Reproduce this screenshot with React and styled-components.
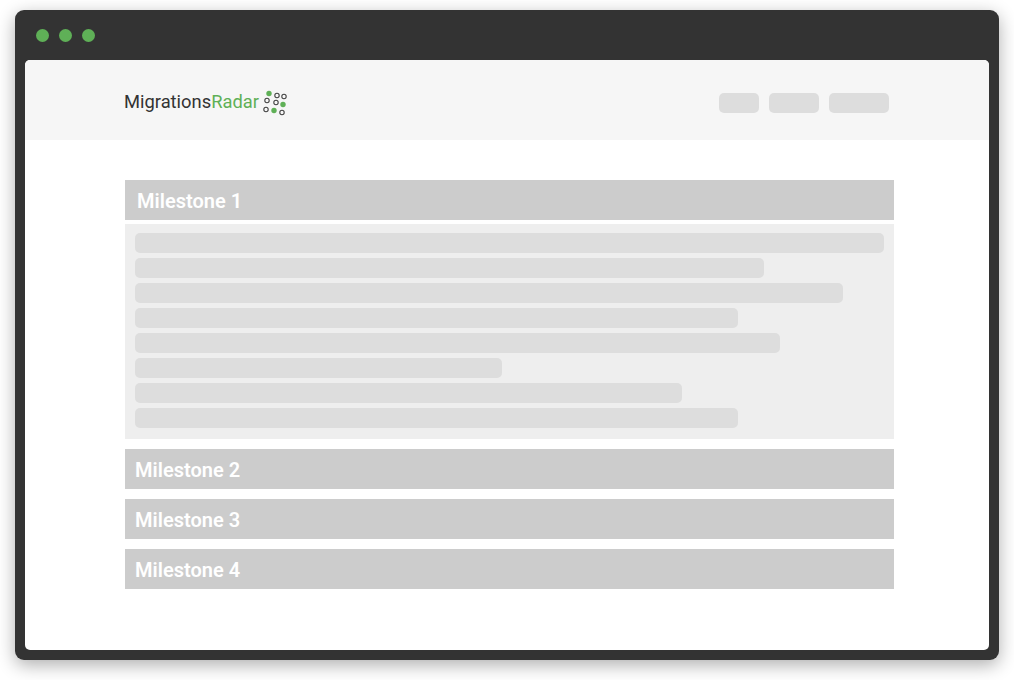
import React from 'react'
import styled, { createGlobalStyle } from 'styled-components'

const GlobalStyle = createGlobalStyle`
  html, body {
    margin: 0;
    padding: 0;
    background: #fff;
    font-family: Roboto, "Liberation Sans", sans-serif;
  }
`

const Page = styled.div`
  width: 1014px;
  height: 680px;
  padding: 10px 15px 20px;
  box-sizing: border-box;
  overflow: hidden;
`

const Window = styled.div`
  height: 650px;
  background: #333;
  border-radius: 9px;
  padding: 0 10px 10px;
  box-sizing: border-box;
  display: flex;
  flex-direction: column;
  box-shadow: 0 5px 18px rgba(0, 0, 0, 0.32);
`

const TitleBar = styled.div`
  height: 50px;
  flex: none;
  display: flex;
  align-items: center;
  gap: 10px;
  padding: 0 0 0 11px;
`

const Light = styled.span`
  width: 13px;
  height: 13px;
  border-radius: 50%;
  background: #5fb057;
`

const Screen = styled.div`
  flex: 1;
  background: #fff;
  border-radius: 5px;
  overflow: hidden;
`

const Header = styled.header`
  height: 80px;
  background: #f6f6f6;
  box-sizing: border-box;
  padding: 5px 100px 0 99px;
  display: flex;
  align-items: center;
  justify-content: space-between;
`

const Logo = styled.div`
  display: flex;
  align-items: center;
  gap: 2px;
`

const LogoText = styled.span`
  width: 136px;
  font-size: 18.35px;
  line-height: 24px;
  padding-bottom: 2px;
  color: #333;
  white-space: nowrap;
`

const LogoAccent = styled.span`
  color: #5fb057;
`

const Nav = styled.nav`
  display: flex;
  gap: 10px;
`

const NavPill = styled.span`
  width: ${p => p.$w}px;
  height: 20px;
  border-radius: 5px;
  background: #ddd;
`

const Main = styled.main`
  padding: 40px 95px 0 100px;
  display: flex;
  flex-direction: column;
`

const Milestone = styled.div`
  height: 40px;
  background: #ccc;
  color: #fff;
  font-size: 20px;
  font-weight: 600;
  line-height: 42px;
  padding-left: ${p => (p.$open ? 12 : 10)}px;
  margin-bottom: ${p => (p.$open ? 4 : 10)}px;
`

const Panel = styled.div`
  background: #eee;
  padding: 9px 10px 11px;
  margin-bottom: 10px;
  display: flex;
  flex-direction: column;
  gap: 5px;
`

const Line = styled.div`
  width: ${p => p.$w}px;
  height: 20px;
  border-radius: 5px;
  background: #ddd;
`

const RadarIcon = () => {
  const open = [[277, 95], [284, 96], [267, 100], [276, 102], [266, 109], [282, 112]]
  const filled = [[269, 93], [283, 104], [274, 110]]
  return (
    <svg width="28" height="28" viewBox="262 88.5 28 28" aria-hidden="true">
      {open.map(([x, y]) => (
        <circle key={x + '-' + y} cx={x} cy={y} r="2.2" fill="none" stroke="#444" strokeWidth="1.1" />
      ))}
      {filled.map(([x, y]) => (
        <circle key={x + '-' + y} cx={x} cy={y} r="2.7" fill="#5fb057" />
      ))}
    </svg>
  )
}

const lines = [749, 629, 708, 603, 645, 367, 547, 603]

const App = () => (
  <Page>
    <GlobalStyle />
    <Window>
      <TitleBar>
        <Light />
        <Light />
        <Light />
      </TitleBar>
      <Screen>
        <Header>
          <Logo>
            <LogoText>Migrations<LogoAccent>Radar</LogoAccent></LogoText>
            <RadarIcon />
          </Logo>
          <Nav>
            <NavPill $w={40} />
            <NavPill $w={50} />
            <NavPill $w={60} />
          </Nav>
        </Header>
        <Main>
          <Milestone $open>Milestone 1</Milestone>
          <Panel>
            {lines.map((w, i) => (
              <Line key={i} $w={w} />
            ))}
          </Panel>
          <Milestone>Milestone 2</Milestone>
          <Milestone>Milestone 3</Milestone>
          <Milestone>Milestone 4</Milestone>
        </Main>
      </Screen>
    </Window>
  </Page>
)

export default App
